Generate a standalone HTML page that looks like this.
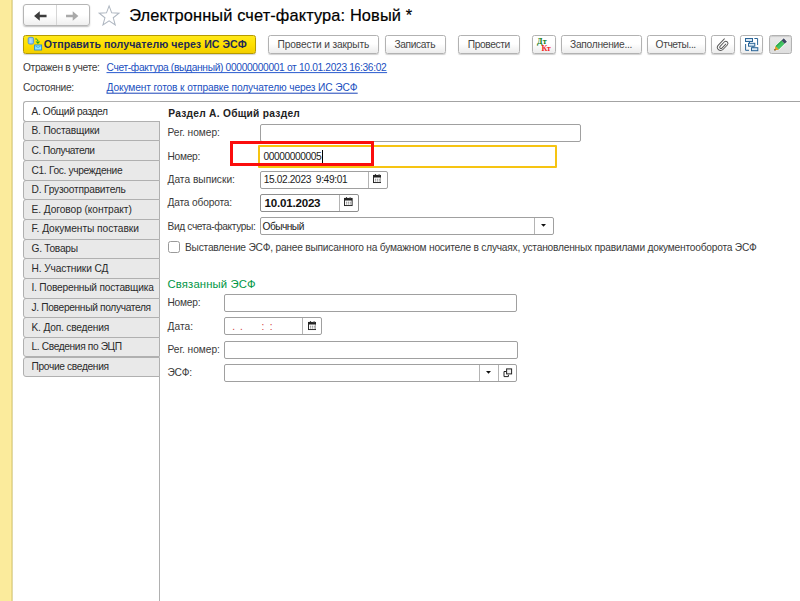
<!DOCTYPE html>
<html lang="ru"><head><meta charset="utf-8"><title>Электронный счет-фактура</title>
<style>
*{box-sizing:border-box;margin:0;padding:0}
html,body{width:800px;height:601px;overflow:hidden;background:#fff}
body{position:relative;font-family:"Liberation Sans",sans-serif;font-size:10px;color:#333}
.a{position:absolute}
.t{position:absolute;white-space:pre;line-height:14px}
.strip{left:0;top:0;width:14px;height:601px;background:linear-gradient(90deg,#fbeb9c 0,#fbeb9c 9.8px,#feee9f 10.2px,#feee9f 10.9px,#ebd982 11.4px,#ded598 12.3px,#e6e1c0 12.8px,#fff 13.4px)}
.btn{position:absolute;top:35px;height:18.5px;border:1px solid #b2b2b2;border-radius:2.5px;background:linear-gradient(#fff,#fff 45%,#ececec);box-shadow:0 1px 1px rgba(0,0,0,.18)}
.ybtn{background:linear-gradient(#ffe81a,#ffe000 50%,#f3cf00);border-color:#b59a00}
.tab{position:absolute;left:23px;width:137.2px;height:20.6px;border:1px solid #b0b0b0;border-radius:3px 0 0 3px;background:#e9e9e9}
.tab.act{background:#fff;border-right:0;border-radius:3px 0 0 3px;z-index:2}
.inp{position:absolute;height:18px;border:1px solid #a0a0a0;border-radius:2px;background:#fff}
.vd{position:absolute;top:0;bottom:0;width:1px;background:#b4b4b4}
</style></head><body>
<div class="a strip"></div>
<div class="a" style="left:23px;top:4.3px;width:66.5px;height:21.7px;border:1px solid #b5b5b5;border-radius:3px;background:linear-gradient(#fff,#fff 50%,#efefef);box-shadow:0 1px 1.5px rgba(0,0,0,.25)"></div>
<div class="a" style="left:56px;top:5.3px;width:1px;height:19.7px;background:#d6d6d6"></div>
<svg class="a" style="left:33.2px;top:9.6px" width="14.6" height="12" viewBox="0 0 14 12" preserveAspectRatio="none"><path d="M1 6 L6.5 1.2 V4.7 H13 V7.3 H6.5 V10.8 Z" fill="#3c3c3c"/></svg>
<svg class="a" style="left:65.2px;top:9.6px" width="14.4" height="12" viewBox="0 0 14 12" preserveAspectRatio="none"><path d="M13 6 L7.5 1.2 V4.7 H1 V7.3 H7.5 V10.8 Z" fill="#a9a9a9"/></svg>
<svg class="a" style="left:97.4px;top:3.8px" width="24.2" height="22.6" viewBox="0 0 24 22" preserveAspectRatio="none"><path d="M12 1.8 L14.6 8.6 L21.8 8.9 L16.1 13.4 L18.1 20.4 L12 16.4 L5.9 20.4 L7.9 13.4 L2.2 8.9 L9.4 8.6 Z" fill="#fff" stroke="#aeb6c0" stroke-width="1"/></svg>
<div class="t" style="left:129.20px;top:8.12px;font-size:16.4px;letter-spacing:0.116px;color:#000;-webkit-text-stroke:.2px #000;">Электронный счет-фактура: Новый *</div>
<div class="btn ybtn" style="left:23px;width:233px"></div>
<div class="btn " style="left:268px;width:110.5px"></div>
<div class="btn " style="left:385px;width:60.5px"></div>
<div class="btn " style="left:458px;width:62px"></div>
<div class="btn " style="left:532px;width:23.5px"></div>
<div class="btn " style="left:561px;width:80.5px"></div>
<div class="btn " style="left:647px;width:59px"></div>
<div class="btn " style="left:711px;width:23.5px"></div>
<div class="btn " style="left:740px;width:23px"></div>
<div class="btn" style="left:768.5px;width:23.5px;background:linear-gradient(#e9e9e9,#dedede);box-shadow:inset 0 1px 1px rgba(0,0,0,.12)"></div>
<div class="t" style="left:43.70px;top:37.33px;font-size:10.6px;letter-spacing:0.039px;color:#1f2a55;font-weight:bold;">Отправить получателю через ИС ЭСФ</div>
<div class="t" style="left:277.60px;top:38.47px;font-size:10.2px;letter-spacing:-0.141px;color:#444;">Провести и закрыть</div>
<div class="t" style="left:394.50px;top:38.47px;font-size:10.2px;letter-spacing:-0.370px;color:#444;">Записать</div>
<div class="t" style="left:467.75px;top:38.47px;font-size:10.2px;letter-spacing:-0.375px;color:#444;">Провести</div>
<div class="t" style="left:570.00px;top:38.47px;font-size:10.2px;letter-spacing:-0.256px;color:#444;">Заполнение...</div>
<div class="t" style="left:655.60px;top:38.47px;font-size:10.2px;letter-spacing:-0.389px;color:#444;">Отчеты...</div>
<div class="t" style="left:23.00px;top:60.67px;font-size:10.2px;letter-spacing:-0.332px;color:#3a3a3a;">Отражен в учете:</div>
<div class="t" style="left:106.50px;top:60.67px;font-size:10.2px;letter-spacing:-0.317px;color:#1a4fc0;">Счет-фактура (выданный) 00000000001 от 10.01.2023 16:36:02</div>
<div class="t" style="left:23.00px;top:80.67px;font-size:10.2px;letter-spacing:-0.276px;color:#3a3a3a;">Состояние:</div>
<div class="t" style="left:106.50px;top:80.67px;font-size:10.2px;letter-spacing:-0.120px;color:#1a4fc0;">Документ готов к отправке получателю через ИС ЭСФ</div>
<svg class="a" style="left:0;top:0" width="400" height="100"><rect x="106.5" y="72.1" width="280.6" height="1" fill="#2a5bd0"/><rect x="106.5" y="92.7" width="251.2" height="1" fill="#1a44b8"/></svg>
<div class="a" style="left:26px;top:101px;width:774px;height:1px;background:#a3a3a3"></div>
<div class="a" style="left:159.2px;top:376px;width:1px;height:225px;background:#b0b0b0"></div>
<div class="tab act" style="top:101.00px"></div>
<div class="t" style="left:31.50px;top:105.07px;font-size:10.2px;letter-spacing:-0.371px;color:#2b2b2b;z-index:3;">A. Общий раздел</div>
<div class="tab" style="top:120.84px"></div>
<div class="t" style="left:31.50px;top:123.71px;font-size:10.2px;letter-spacing:-0.190px;color:#2b2b2b;z-index:3;">B. Поставщики</div>
<div class="tab" style="top:140.48px"></div>
<div class="t" style="left:31.50px;top:144.35px;font-size:10.2px;letter-spacing:-0.473px;color:#2b2b2b;z-index:3;">C. Получатели</div>
<div class="tab" style="top:160.12px"></div>
<div class="t" style="left:31.50px;top:163.99px;font-size:10.2px;letter-spacing:-0.324px;color:#2b2b2b;z-index:3;">C1. Гос. учреждение</div>
<div class="tab" style="top:179.76px"></div>
<div class="t" style="left:31.50px;top:182.63px;font-size:10.2px;letter-spacing:-0.202px;color:#2b2b2b;z-index:3;">D. Грузоотправитель</div>
<div class="tab" style="top:199.40px"></div>
<div class="t" style="left:31.50px;top:203.27px;font-size:10.2px;letter-spacing:-0.068px;color:#2b2b2b;z-index:3;">E. Договор (контракт)</div>
<div class="tab" style="top:219.04px"></div>
<div class="t" style="left:31.50px;top:221.91px;font-size:10.2px;letter-spacing:-0.039px;color:#2b2b2b;z-index:3;">F. Документы поставки</div>
<div class="tab" style="top:238.68px"></div>
<div class="t" style="left:31.50px;top:241.55px;font-size:10.2px;letter-spacing:-0.261px;color:#2b2b2b;z-index:3;">G. Товары</div>
<div class="tab" style="top:258.32px"></div>
<div class="t" style="left:31.50px;top:262.19px;font-size:10.2px;letter-spacing:-0.118px;color:#2b2b2b;z-index:3;">H. Участники СД</div>
<div class="tab" style="top:277.96px"></div>
<div class="t" style="left:31.50px;top:280.83px;font-size:10.2px;letter-spacing:-0.211px;color:#2b2b2b;z-index:3;">I. Поверенный поставщика</div>
<div class="tab" style="top:297.60px"></div>
<div class="t" style="left:31.50px;top:301.47px;font-size:10.2px;letter-spacing:-0.332px;color:#2b2b2b;z-index:3;">J. Поверенный получателя</div>
<div class="tab" style="top:317.24px"></div>
<div class="t" style="left:31.50px;top:321.11px;font-size:10.2px;letter-spacing:-0.186px;color:#2b2b2b;z-index:3;">K. Доп. сведения</div>
<div class="tab" style="top:336.88px"></div>
<div class="t" style="left:31.50px;top:339.75px;font-size:10.2px;letter-spacing:-0.371px;color:#2b2b2b;z-index:3;">L. Сведения по ЭЦП</div>
<div class="tab" style="top:356.52px"></div>
<div class="t" style="left:31.50px;top:360.39px;font-size:10.2px;letter-spacing:-0.336px;color:#2b2b2b;z-index:3;">Прочие сведения</div>
<div class="t" style="left:168.20px;top:107.07px;font-size:10.2px;letter-spacing:0.278px;color:#222;font-weight:bold;">Раздел А. Общий раздел</div>
<div class="t" style="left:167.50px;top:125.87px;font-size:10.2px;letter-spacing:-0.017px;color:#3a3a3a;">Рег. номер:</div>
<div class="inp" style="left:260.3px;top:124px;width:320.7px"></div>
<div class="t" style="left:167.50px;top:150.47px;font-size:10.2px;letter-spacing:-0.286px;color:#3a3a3a;">Номер:</div>
<div class="inp" style="left:257.5px;top:145px;width:299.5px;height:23px;border:2px solid #f6c412;border-radius:1px"></div>
<div class="t" style="left:263.60px;top:150.47px;font-size:10.2px;letter-spacing:-0.420px;color:#222;">00000000005</div>
<div class="a" style="left:322.3px;top:149.5px;width:1px;height:13px;background:#000"></div>
<div class="a" style="left:230px;top:141px;width:144.3px;height:25px;border:3px solid #fb0d0d"></div>
<div class="t" style="left:167.50px;top:172.87px;font-size:10.2px;letter-spacing:0.001px;color:#3a3a3a;">Дата выписки:</div>
<div class="inp" style="left:260.3px;top:171px;width:128px"><div class="vd" style="left:107.2px"></div></div>
<div class="t" style="left:263.80px;top:172.87px;font-size:10.2px;letter-spacing:-0.381px;color:#222;">15.02.2023  9:49:01</div>
<div class="t" style="left:167.50px;top:195.97px;font-size:10.2px;letter-spacing:-0.175px;color:#3a3a3a;">Дата оборота:</div>
<div class="inp" style="left:260.3px;top:194.1px;width:98.5px;border-color:#8e8e8e"><div class="vd" style="left:78.2px"></div></div>
<div class="t" style="left:264.60px;top:195.63px;font-size:11.6px;letter-spacing:-0.229px;color:#111;font-weight:bold;">10.01.2023</div>
<div class="t" style="left:167.50px;top:219.97px;font-size:10.2px;letter-spacing:-0.371px;color:#3a3a3a;">Вид счета-фактуры:</div>
<div class="inp" style="left:260.3px;top:217.2px;width:293.6px"><div class="vd" style="left:273.2px"></div></div>
<div class="t" style="left:262.50px;top:219.97px;font-size:10.2px;letter-spacing:-0.531px;color:#222;">Обычный</div>
<div class="a" style="left:168px;top:241.3px;width:11.8px;height:11.8px;border:1px solid #9a9a9a;border-radius:2.5px;background:#fff"></div>
<div class="t" style="left:185.00px;top:241.27px;font-size:10.2px;letter-spacing:-0.216px;color:#3a3a3a;">Выставление ЭСФ, ранее выписанного на бумажном носителе в случаях, установленных правилами документооборота ЭСФ</div>
<div class="t" style="left:167.60px;top:277.08px;font-size:11.3px;letter-spacing:0.121px;color:#009646;">Связанный ЭСФ</div>
<div class="t" style="left:167.50px;top:295.87px;font-size:10.2px;letter-spacing:-0.246px;color:#3a3a3a;">Номер:</div>
<div class="inp" style="left:224px;top:294px;width:292.7px"></div>
<div class="t" style="left:167.50px;top:320.17px;font-size:10.2px;letter-spacing:0.020px;color:#3a3a3a;">Дата:</div>
<div class="inp" style="left:224px;top:317.3px;width:98px"><div class="vd" style="left:77px"></div></div>
<div class="t" style="left:167.50px;top:342.87px;font-size:10.2px;letter-spacing:-0.017px;color:#3a3a3a;">Рег. номер:</div>
<div class="inp" style="left:224px;top:341.1px;width:293.7px"></div>
<div class="t" style="left:167.50px;top:365.87px;font-size:10.2px;letter-spacing:-0.262px;color:#3a3a3a;">ЭСФ:</div>
<div class="inp" style="left:224px;top:364.1px;width:292.7px"><div class="vd" style="left:253.7px"></div><div class="vd" style="left:273.3px"></div></div>
<div class="t" style="left:537.00px;top:35.03px;font-size:8px;letter-spacing:0.166px;color:#0e7a12;font-weight:bold;font-family:'Liberation Serif',serif;">Дт</div>
<div class="t" style="left:541.50px;top:41.99px;font-size:8.1px;letter-spacing:-0.450px;color:#f21d1d;font-weight:bold;font-family:'Liberation Serif',serif;">Кт</div>
<!-- yellow btn icon -->
<svg class="a" style="left:27px;top:36.1px" width="16" height="16" viewBox="0 0 16 16">
<rect x="1.2" y="1.3" width="5.4" height="6.8" rx="1.6" fill="#8cc4f2" stroke="#4f93da" stroke-width=".9"/>
<rect x="2.6" y="2.5" width="2" height="4.4" fill="#b9defa" opacity=".8"/>
<path d="M8.4 2.9 Q11 3 11 5.8" fill="none" stroke="#18a52c" stroke-width="1.1" stroke-dasharray="1.4 .7"/>
<path d="M8.6 5.6 H13.2 L10.9 7.9 Z" fill="#18a52c"/>
<rect x="7.6" y="9" width="7" height="5" fill="#8fe4fb" stroke="#2588d6" stroke-width=".9"/>
<path d="M8.6 10.2 Q11.1 12.6 13.6 10.2" fill="none" stroke="#3da3d8" stroke-width=".9"/>
</svg>
<!-- clip -->
<svg class="a" style="left:715.2px;top:36.6px" width="16" height="16" viewBox="-8 -8 16 16">
<g transform="rotate(43.8)" fill="none" stroke="#585858" stroke-width=".95" stroke-linecap="round">
<path d="M-3.3 -5.4 V3.3 A3.2 3.2 0 0 0 3.1 3.3 V-3 A2.15 2.15 0 0 0 -1.2 -3 V3 A1.3 1.3 0 0 0 1.4 3 V-2.6"/>
</g></svg>
<!-- structure -->
<svg class="a" style="left:744px;top:37px" width="16" height="15" viewBox="0 0 16 15">
<g fill="#d9e8f5" stroke="#2a6496" stroke-width="1">
<rect x="1.5" y="1.5" width="7" height="3"/>
<rect x="4.5" y="6.3" width="6.3" height="2.9"/>
<rect x="7.5" y="10.7" width="6.3" height="3"/>
</g>
<g fill="none" stroke="#2a6496" stroke-width="1">
<path d="M10.4 1.5 H13.6 V8"/><path d="M1.6 7 V13.3 H5"/><path d="M5.5 4.5 V6.3"/><path d="M9 9.2 V10.7"/>
</g></svg>
<!-- pencil -->
<svg class="a" style="left:771px;top:36px" width="19" height="18" viewBox="0 0 19 18">
<g transform="translate(3.2 14.6) rotate(-43.5)">
<path d="M-.7 0 L4 -3 H16 V3 H4 Z" fill="#fff" opacity=".8"/>
<path d="M0 0 L4.2 -2.3 V2.3 Z" fill="#f4b52f"/>
<path d="M2.2 -1.2 L4.2 -2.3 V2.3 L2.2 1.2Z" fill="#e09a28"/>
<path d="M0 0 L1.6 -.9 V.9 Z" fill="#1a1208"/>
<rect x="4.2" y="-2.3" width="8" height="4.6" fill="#41c462"/>
<rect x="4.2" y="-2.3" width="8" height="1.3" fill="#2fa84c"/>
<rect x="12.2" y="-2.3" width="3.2" height="4.6" fill="#3d4660"/>
</g></svg>
<!-- calendars -->
<svg class="a" style="left:372.8px;top:174.4px" width="8.6" height="9.5" viewBox="0 0 9 10" preserveAspectRatio="none"><rect x=".5" y="1.5" width="8" height="7.5" fill="#fff" stroke="#222" stroke-width="1"/><rect x=".5" y="1.3" width="8" height="2.4" fill="#222"/><rect x="2" y=".2" width="1.2" height="1.6" fill="#222"/><rect x="5.8" y=".2" width="1.2" height="1.6" fill="#555"/><g fill="#777"><rect x="2" y="5" width="1.2" height="1"/><rect x="4" y="5" width="1.2" height="1"/><rect x="6" y="5" width="1.2" height="1"/><rect x="2" y="6.8" width="1.2" height="1"/><rect x="4" y="6.8" width="1.2" height="1"/><rect x="6" y="6.8" width="1.2" height="1"/></g></svg>
<svg class="a" style="left:344.4px;top:197.4px" width="8.6" height="9.5" viewBox="0 0 9 10" preserveAspectRatio="none"><rect x=".5" y="1.5" width="8" height="7.5" fill="#fff" stroke="#222" stroke-width="1"/><rect x=".5" y="1.3" width="8" height="2.4" fill="#222"/><rect x="2" y=".2" width="1.2" height="1.6" fill="#222"/><rect x="5.8" y=".2" width="1.2" height="1.6" fill="#555"/><g fill="#777"><rect x="2" y="5" width="1.2" height="1"/><rect x="4" y="5" width="1.2" height="1"/><rect x="6" y="5" width="1.2" height="1"/><rect x="2" y="6.8" width="1.2" height="1"/><rect x="4" y="6.8" width="1.2" height="1"/><rect x="6" y="6.8" width="1.2" height="1"/></g></svg>
<svg class="a" style="left:307.7px;top:321px" width="8.6" height="9.5" viewBox="0 0 9 10" preserveAspectRatio="none"><rect x=".5" y="1.5" width="8" height="7.5" fill="#fff" stroke="#222" stroke-width="1"/><rect x=".5" y="1.3" width="8" height="2.4" fill="#222"/><rect x="2" y=".2" width="1.2" height="1.6" fill="#222"/><rect x="5.8" y=".2" width="1.2" height="1.6" fill="#555"/><g fill="#777"><rect x="2" y="5" width="1.2" height="1"/><rect x="4" y="5" width="1.2" height="1"/><rect x="6" y="5" width="1.2" height="1"/><rect x="2" y="6.8" width="1.2" height="1"/><rect x="4" y="6.8" width="1.2" height="1"/><rect x="6" y="6.8" width="1.2" height="1"/></g></svg>
<!-- dropdown arrows -->
<svg class="a" style="left:541.4px;top:224.3px" width="5" height="3" viewBox="0 0 5 3"><path d="M0 0 H5 L2.5 2.8 Z" fill="#111"/></svg>
<svg class="a" style="left:485.9px;top:371.2px" width="5" height="3" viewBox="0 0 5 3"><path d="M0 0 H5 L2.5 2.8 Z" fill="#111"/></svg>
<!-- open icon -->
<svg class="a" style="left:503.4px;top:367.8px" width="10" height="10" viewBox="0 0 10 10"><path d="M3 3.5 H1 V8.6 H5.4 V6.8" fill="none" stroke="#222" stroke-width="1"/><rect x="3.6" y=".9" width="5" height="5" fill="#f2f2f2" stroke="#222" stroke-width="1"/></svg>
<!-- date mask -->
<div class="t" style="left:232.2px;top:319.6px;font-size:10px;color:#d23a3a;letter-spacing:0">.</div>
<div class="t" style="left:240px;top:319.6px;font-size:10px;color:#d23a3a;letter-spacing:0">.</div>
<div class="t" style="left:261.4px;top:319.8px;font-size:10px;color:#d23a3a;letter-spacing:0">:</div>
<div class="t" style="left:269.8px;top:319.8px;font-size:10px;color:#d23a3a;letter-spacing:0">:</div>

</body></html>
